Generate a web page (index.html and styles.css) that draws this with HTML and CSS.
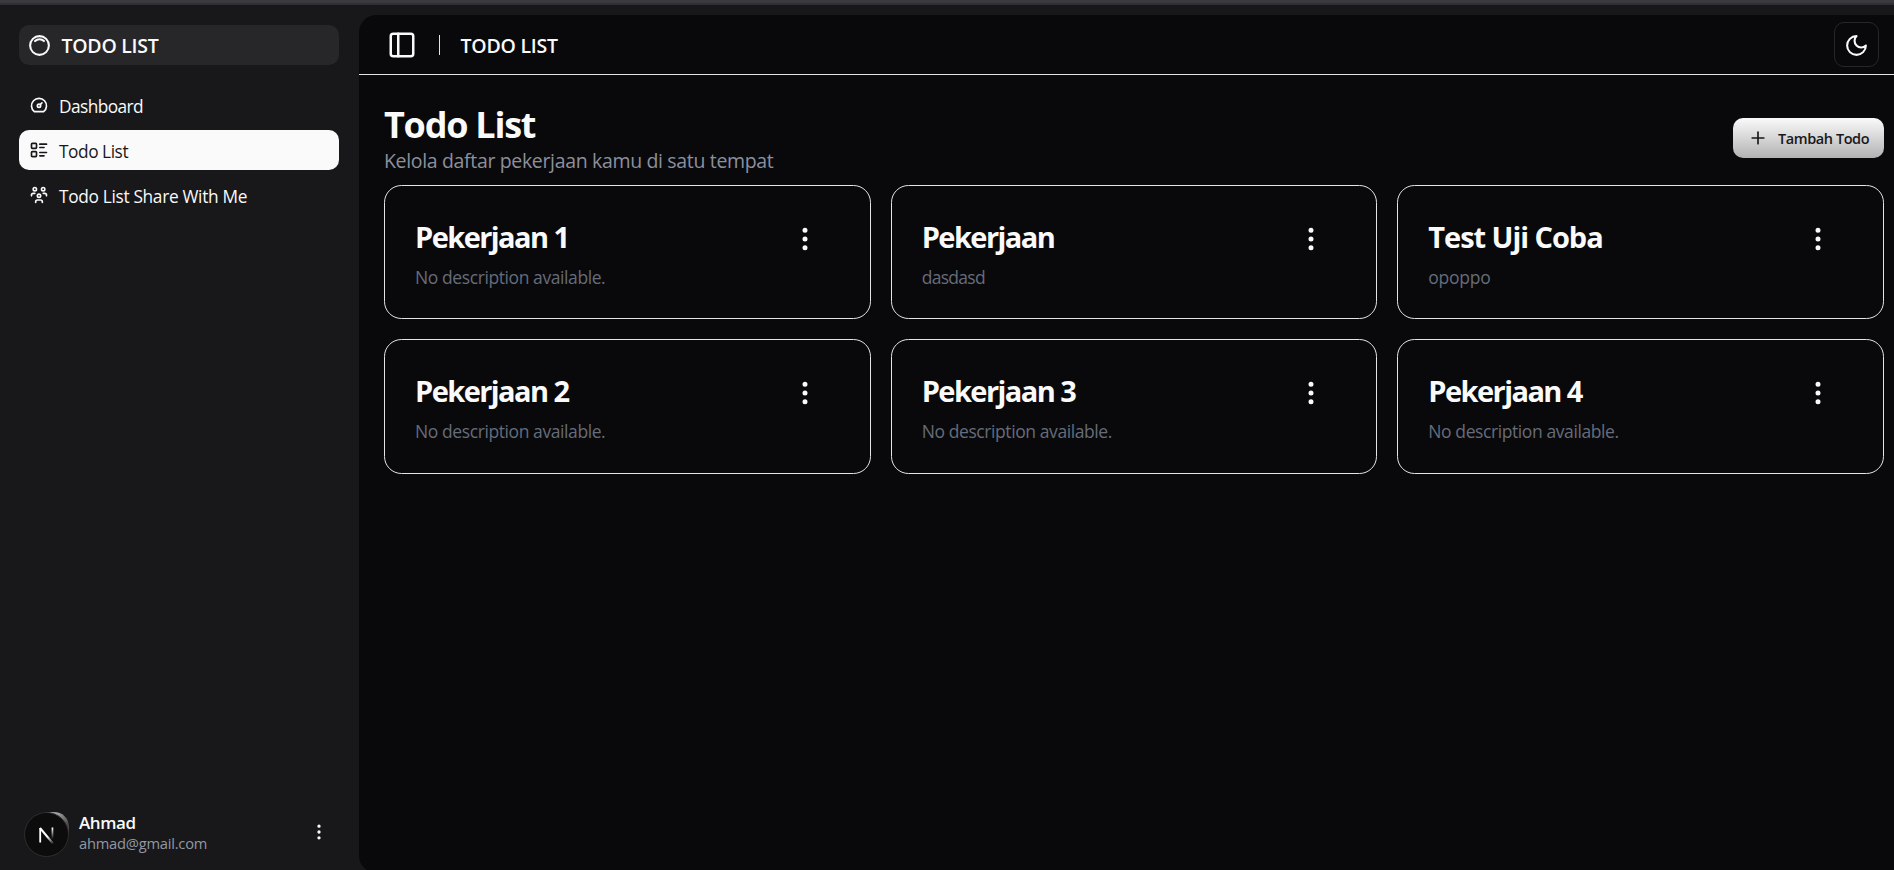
FILE: index.html
```html
<!DOCTYPE html>
<html lang="id">
<head>
<meta charset="utf-8">
<title>Todo List</title>
<link rel="stylesheet" href="styles.css">
</head>
<body>
<svg class="defs" width="0" height="0">
  <symbol id="more" viewBox="0 0 24 24"><circle cx="12" cy="12" r="1"/><circle cx="12" cy="5" r="1"/><circle cx="12" cy="19" r="1"/></symbol>
</svg>
<div class="topbar"></div>
<div class="shell">
  <aside class="sidebar">
    <a class="brand">
      <svg class="icon icon-25" viewBox="0 0 24 24"><path d="M5.636 5.636a9 9 0 1 0 12.728 12.728a9 9 0 0 0 -12.728 -12.728z"/><path d="M16.243 7.757a6 6 0 0 0 -8.486 0"/></svg>
      <span>TODO LIST</span>
    </a>
    <nav class="nav">
      <a class="nav-item">
        <svg class="icon icon-20" viewBox="0 0 24 24"><path d="M10 13a2 2 0 1 0 4 0a2 2 0 1 0 -4 0"/><path d="M13.45 11.55l2.05 -2.05"/><path d="M6.4 20a9 9 0 1 1 11.2 0z"/></svg>
        <span class="nav-dashboard">Dashboard</span>
      </a>
      <a class="nav-item active">
        <svg class="icon icon-20" viewBox="0 0 24 24"><path d="M13 5h8"/><path d="M13 9h5"/><path d="M13 15h8"/><path d="M13 19h5"/><rect x="3" y="4" width="6" height="6" rx="1"/><rect x="3" y="14" width="6" height="6" rx="1"/></svg>
        <span class="nav-list">Todo List</span>
      </a>
      <a class="nav-item">
        <svg class="icon icon-20" viewBox="0 0 24 24"><path d="M10 13a2 2 0 1 0 4 0a2 2 0 0 0 -4 0"/><path d="M8 21v-1a2 2 0 0 1 2 -2h4a2 2 0 0 1 2 2v1"/><path d="M15 5a2 2 0 1 0 4 0a2 2 0 0 0 -4 0"/><path d="M17 10h2a2 2 0 0 1 2 2v1"/><path d="M5 5a2 2 0 1 0 4 0a2 2 0 0 0 -4 0"/><path d="M3 13v-1a2 2 0 0 1 2 -2h2"/></svg>
        <span>Todo List Share With Me</span>
      </a>
    </nav>
    <div class="user">
      <svg class="avatar" viewBox="0 0 45 45">
        <defs>
          <linearGradient id="corner" x1="0.6" y1="0" x2="1" y2="0.5"><stop offset="0" stop-color="#a0a0a0"/><stop offset="1" stop-color="#4a4a4a"/></linearGradient>
          <linearGradient id="diag" gradientUnits="userSpaceOnUse" x1="24" y1="24" x2="30" y2="32"><stop offset="0" stop-color="#fff"/><stop offset="1" stop-color="#fff" stop-opacity="0"/></linearGradient>
          <linearGradient id="stem" gradientUnits="userSpaceOnUse" x1="0" y1="16" x2="0" y2="27"><stop offset="0" stop-color="#fff"/><stop offset="1" stop-color="#fff" stop-opacity="0"/></linearGradient>
        </defs>
        <path d="M30 0C38 0 45 6 45 15V22H22V0Z" fill="url(#corner)"/>
        <circle cx="22.5" cy="22.5" r="22" fill="#0c0c0c" stroke="#2e2e2e"/>
        <path d="M16.2 30.500V16" stroke="#fff" stroke-width="1.8" fill="none"/>
        <path d="M16 16L29 31.500" stroke="url(#diag)" stroke-width="2" fill="none"/>
        <rect x="27.600" y="15.500" width="1.700" height="12" fill="url(#stem)"/>
      </svg>
      <div class="user-text">
        <div class="user-name">Ahmad</div>
        <div class="user-mail">ahmad@gmail.com</div>
      </div>
      <svg class="icon icon-20 user-more"><use href="#more"/></svg>
    </div>
  </aside>
  <main class="main">
    <header class="header">
      <svg class="icon icon-30" viewBox="0 0 24 24"><rect x="3" y="3" width="18" height="18" rx="2"/><path d="M9 3v18"/></svg>
      <span class="divider"></span>
      <span class="header-title">TODO LIST</span>
      <button class="theme"><svg class="icon icon-25" viewBox="0 0 24 24"><path d="M12 3a6 6 0 0 0 9 9 9 9 0 1 1-9-9Z"/></svg></button>
    </header>
    <section class="content">
      <div class="intro">
        <div>
          <h1>Todo List</h1>
          <p>Kelola daftar pekerjaan kamu di satu tempat</p>
        </div>
        <button class="add"><svg class="icon icon-20" viewBox="0 0 24 24"><path d="M5 12h14"/><path d="M12 5v14"/></svg><span>Tambah Todo</span></button>
      </div>
      <div class="grid">
        <article class="card"><div><h2>Pekerjaan 1</h2><p>No description available.</p></div><svg class="icon icon-30"><use href="#more"/></svg></article>
        <article class="card"><div><h2>Pekerjaan</h2><p class="tight-desc">dasdasd</p></div><svg class="icon icon-30"><use href="#more"/></svg></article>
        <article class="card"><div><h2 class="loose">Test Uji Coba</h2><p class="loose-desc">opoppo</p></div><svg class="icon icon-30"><use href="#more"/></svg></article>
        <article class="card"><div><h2>Pekerjaan 2</h2><p>No description available.</p></div><svg class="icon icon-30"><use href="#more"/></svg></article>
        <article class="card"><div><h2>Pekerjaan 3</h2><p>No description available.</p></div><svg class="icon icon-30"><use href="#more"/></svg></article>
        <article class="card"><div><h2>Pekerjaan 4</h2><p>No description available.</p></div><svg class="icon icon-30"><use href="#more"/></svg></article>
      </div>
    </section>
  </main>
</div>
</body>
</html>
```

FILE: styles.css
```css
* { box-sizing: border-box; }
html, body { height: 100%; }
body {
  margin: 0;
  display: flex;
  flex-direction: column;
  overflow: hidden;
  background: #18181b;
  color: #fafafa;
  font-family: "Segoe UI", "Open Sans", "Noto Sans", sans-serif;
}
h1, h2, p { margin: 0; }
button { font: inherit; padding: 0; }
.defs { position: absolute; }

.icon {
  flex: none;
  display: block;
  fill: none;
  stroke: currentColor;
  stroke-width: 2;
  stroke-linecap: round;
  stroke-linejoin: round;
}
.icon-20 { width: 20px; height: 20px; }
.icon-25 { width: 25px; height: 25px; }
.icon-30 { width: 30px; height: 30px; }

.topbar { flex: none; height: 5px; background: #3b3a3f; border-bottom: 2px solid #302f34; }
.shell { flex: 1; min-height: 0; display: flex; }

/* Sidebar */
.sidebar { width: 359px; flex: none; display: flex; flex-direction: column; padding: 20px 20px 0 19px; }
.brand {
  height: 40px;
  display: flex;
  align-items: center;
  gap: 9.5px;
  padding-left: 8px;
  border-radius: 10px;
  background: #27272a;
  font-size: 19.5px;
  font-weight: 600;
  letter-spacing: -0.26px;
}
.nav { margin-top: 20px; display: flex; flex-direction: column; gap: 5px; }
.nav-item {
  height: 40px;
  display: flex;
  align-items: center;
  gap: 10px;
  padding-left: 10px;
  border-radius: 10px;
  font-size: 17.3px;
  letter-spacing: -0.32px;
}
.nav-item span { padding-top: 2px; }
.nav-item .nav-dashboard { letter-spacing: -0.58px; }
.nav-item .nav-list { letter-spacing: -0.45px; }
.nav-item.active { background: #fafafa; color: #18181b; }

.user { margin-top: auto; height: 66px; display: flex; align-items: flex-start; padding: 8px 10px 0 5px; }
.avatar { width: 45px; height: 45px; flex: none; }
.user-text { margin-left: 10px; }
.user-name { font-size: 17px; line-height: 24px; font-weight: 600; letter-spacing: -0.38px; margin: -1px 0; }
.user-mail { font-size: 14.7px; line-height: 18px; letter-spacing: -0.23px; color: #9297a3; }
.user-more { margin: 10px 0 0 auto; }

/* Main panel */
.main { flex: 1; min-width: 0; margin: 10px 0 -3px; background: #09090b; border-radius: 17.5px 0 0 17.5px; }
.header { height: 60px; display: flex; align-items: center; padding: 0 15px 0 28px; border-bottom: 1px solid #e4e4e7; }
.divider { width: 1px; height: 20px; margin: 1px 20.5px 0 22px; background: #e4e4e7; }
.header-title { padding-top: 2px; font-size: 19.5px; font-weight: 600; letter-spacing: -0.22px; }
.theme {
  width: 45px;
  height: 45px;
  margin-left: auto;
  display: grid;
  place-items: center;
  border: 1px solid #27272a;
  border-radius: 10px;
  background: none;
  color: inherit;
}
.theme .icon { margin-top: 1px; }
.content { padding: 26px 10px 0 25px; }
.intro { height: 74px; display: flex; align-items: center; justify-content: space-between; }
.intro h1 { padding-top: 1px; font-size: 36px; line-height: 45px; font-weight: 700; letter-spacing: -1.25px; }
.intro p { margin-top: -1px; font-size: 19.5px; line-height: 29px; letter-spacing: -0.34px; color: #8c909e; }
.add {
  width: 151px;
  height: 40px;
  display: flex;
  align-items: center;
  padding-left: 15px;
  gap: 10px;
  border: 0;
  border-radius: 10px;
  background: linear-gradient(#fafafa, #b2b2b3);
  color: #18181b;
  font-size: 14.5px;
  font-weight: 600;
  letter-spacing: -0.42px;
}

.grid { margin-top: 10px; display: grid; grid-template-columns: repeat(3, 1fr); gap: 20px; }
.card {
  height: 134.4px;
  display: flex;
  justify-content: space-between;
  padding: 31.8px 50px 0 30px;
  border: 1px solid #e4e4e7;
  border-radius: 17.5px;
}
.card h2 { font-size: 29px; line-height: 38px; font-weight: 700; letter-spacing: -1.56px; }
.card h2.loose { letter-spacing: -1.05px; }
.card p { margin-top: 9px; font-size: 17.5px; line-height: 24px; letter-spacing: -0.41px; color: #666c7a; }
.card p.loose-desc { letter-spacing: -0.25px; }
.card p.tight-desc { letter-spacing: -0.7px; }
.card .icon { margin-top: 6px; }
```
